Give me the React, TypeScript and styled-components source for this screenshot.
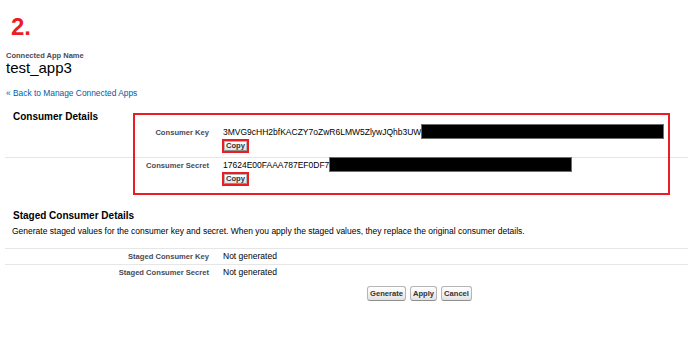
import styled, { createGlobalStyle } from "styled-components";

const GlobalStyle = createGlobalStyle`
  body {
    margin: 0;
    background: #fff;
    color: #000;
    font-family: "Liberation Sans", Arial, sans-serif;
  }
`;

const StyledPage = styled.div`
  width: 688px;
  height: 362px;
  padding-top: 15px;
  box-sizing: border-box;
  overflow: hidden;
`;

const StepNumber = styled.div`
  margin-left: 11px;
  font-size: 24px;
  line-height: 24px;
  font-weight: bold;
  color: #ec1c24;
`;

const AppHeader = styled.div`
  margin: 12px 0 0 6px;

  h2 {
    margin: 0;
    font-size: 7.5px;
    line-height: 9px;
    font-weight: bold;
    color: #4a4a56;
  }

  h1 {
    margin: 0;
    font-size: 15px;
    line-height: 16px;
    font-weight: normal;
    color: #000;
  }
`;

const BackLink = styled.a`
  display: block;
  margin: 12px 0 0 6px;
  font-size: 8.4px;
  line-height: 10px;
  color: #015ba7;
  text-decoration: none;
`;

const Section = styled.div<{ $top: number }>`
  position: relative;
  margin-top: ${(p) => p.$top}px;
`;

const SectionTitle = styled.h3`
  margin: 0;
  padding-left: 13px;
  font-size: 10px;
  line-height: 12px;
  font-weight: bold;
  color: #000;
`;

const Description = styled.p`
  margin: 3px 0 0 12px;
  font-size: 8.5px;
  line-height: 12px;
  color: #000;
`;

const DetailTable = styled.div<{ $ruled?: boolean }>`
  margin: ${(p) => (p.$ruled ? "11px" : "2px")} 0 0 5px;
  border-top: ${(p) => (p.$ruled ? "1px solid #e6e6e6" : "none")};
`;

const Row = styled.div`
  display: grid;
  grid-template-columns: 204px 1fr;
  column-gap: 14px;
  align-items: baseline;

  & + & {
    border-top: 1px solid #e6e6e6;
  }
`;

const Label = styled.div`
  text-align: right;
  font-size: 7.6px;
  line-height: 14px;
  font-weight: bold;
  color: #4a4a56;
`;

const Value = styled.div`
  font-size: 8.5px;
  line-height: 14px;
  color: #000;
  white-space: nowrap;
`;

const Redacted = styled.span<{ $width: number }>`
  display: inline-block;
  width: ${(p) => p.$width}px;
  height: 15px;
  margin-top: -2px;
  box-sizing: border-box;
  background: #000;
  border: 1px solid #6e6e6e;
  vertical-align: -4px;
`;

const CopyOutline = styled.div`
  display: flex;
  width: fit-content;
  margin: 0 0 4px -1px;
  border: 2px solid #ec1c24;
`;

const Button = styled.button<{ $small?: boolean }>`
  height: ${(p) => (p.$small ? "10px" : "15px")};
  padding: 0 ${(p) => (p.$small ? "1px" : "2px")};
  box-sizing: border-box;
  font-family: "Liberation Sans", Arial, sans-serif;
  font-size: 7.6px;
  line-height: 8px;
  font-weight: bold;
  color: #333;
  background: linear-gradient(#ffffff, #f2f2f2 50%, #e2e2e2);
  border: 1px solid #b5b5b5;
  border-bottom-color: #8f8f8f;
  border-radius: ${(p) => (p.$small ? "0" : "3px")};
`;

const RedFrame = styled.div`
  position: absolute;
  top: 2px;
  left: 133px;
  width: 537px;
  height: 82px;
  box-sizing: border-box;
  border: 2px solid #ec1c24;
  pointer-events: none;
`;

const ButtonBar = styled.div`
  display: flex;
  gap: 4px;
  margin-top: 6px;
  padding-left: 367px;
`;

function App() {
  const consumer = [
    { label: "Consumer Key", value: "3MVG9cHH2bfKACZY7oZwR6LMW5ZlywJQhb3UW" },
    { label: "Consumer Secret", value: "17624E00FAAA787EF0DF7" },
  ];

  const staged = ["Staged Consumer Key", "Staged Consumer Secret"];

  return (
    <StyledPage>
      <GlobalStyle />
      <StepNumber>2.</StepNumber>
      <AppHeader>
        <h2>Connected App Name</h2>
        <h1>test_app3</h1>
      </AppHeader>
      <BackLink href="#">« Back to Manage Connected Apps</BackLink>

      <Section $top={13}>
        <SectionTitle>Consumer Details</SectionTitle>
        <DetailTable>
          {consumer.map((row) => (
            <Row key={row.label}>
              <Label>{row.label}</Label>
              <Value>
                {row.value}
                <Redacted $width={243} />
                <CopyOutline>
                  <Button $small>Copy</Button>
                </CopyOutline>
              </Value>
            </Row>
          ))}
        </DetailTable>
        <RedFrame />
      </Section>

      <Section $top={20}>
        <SectionTitle>Staged Consumer Details</SectionTitle>
        <Description>
          Generate staged values for the consumer key and secret. When you
          apply the staged values, they replace the original consumer details.
        </Description>
        <DetailTable $ruled>
          {staged.map((label) => (
            <Row key={label}>
              <Label>{label}</Label>
              <Value>Not generated</Value>
            </Row>
          ))}
        </DetailTable>
        <ButtonBar>
          <Button>Generate</Button>
          <Button>Apply</Button>
          <Button>Cancel</Button>
        </ButtonBar>
      </Section>
    </StyledPage>
  );
}

export default App;
